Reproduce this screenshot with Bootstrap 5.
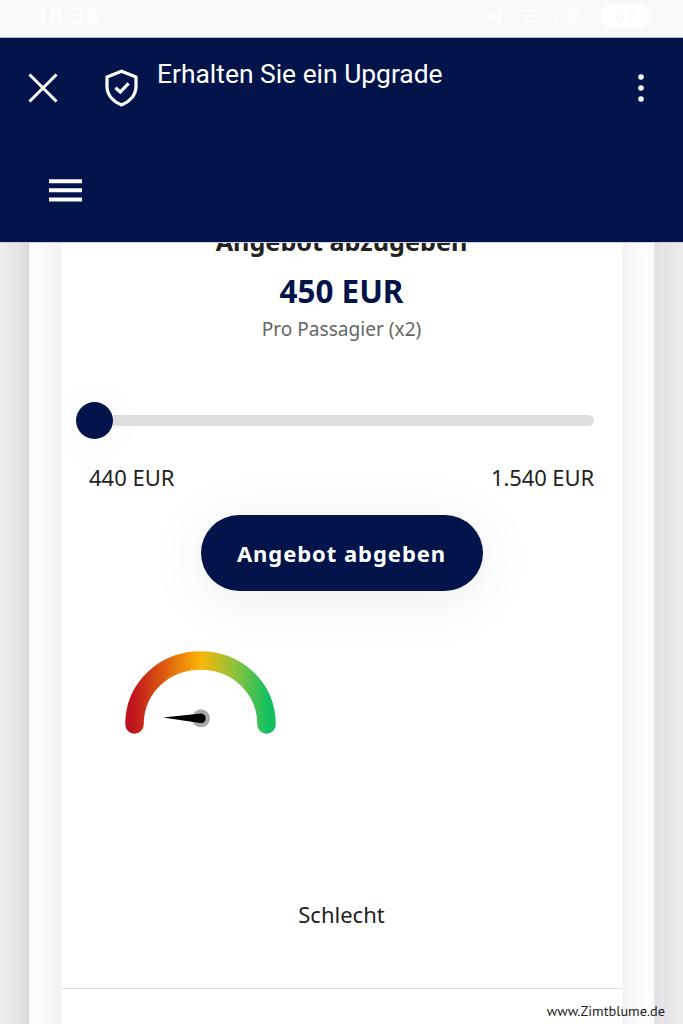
<!DOCTYPE html>
<html lang="de">

<head>
    <meta charset="UTF-8">
    <meta name="viewport" content="width=device-width, initial-scale=1.0">
    <title>Erhalten Sie ein Upgrade</title>

    <!-- Bootstrap CSS -->
    <link href="https://cdn.jsdelivr.net/npm/bootstrap@5.3.0/dist/css/bootstrap.min.css" rel="stylesheet">

    <style>
        body {
            height: 1024px;
            overflow: hidden;
            background-color: #fff;
            color: #222;
            font-family: "Noto Sans", sans-serif;
            font-size: 22px;
            line-height: 30px;
        }

        .status-bar {
            height: 38px;
            padding: 0 34px 5px 35px;
            background-color: #f8f9fb;
            border-bottom: 1px solid #b5b7c9;
            color: #fff;
            font-family: Roboto, sans-serif;
            font-size: 24.5px;
        }

        .battery {
            width: 48px;
            height: 24px;
            background-color: #fff;
            color: #f8f9fb;
            font-size: 18px;
            line-height: 24px;
        }

        .app-header {
            height: 205px;
            background-color: #03144b;
            border-bottom: 1px solid #cdd0e0;
            color: #fff;
        }

        .title-row {
            height: 100px;
            padding-left: 26px;
            padding-right: 36px;
        }

        .shield-icon {
            margin-left: 43px;
        }

        .page-title {
            margin-left: 17px;
            padding-bottom: 28px;
            font-family: Roboto, sans-serif;
            font-size: 26.4px;
            font-weight: 400;
            line-height: 30px;
        }

        .menu-row {
            padding: 40px 0 0 49px;
        }

        .page-area {
            height: 781px;
            padding: 0 29px;
            background: linear-gradient(90deg, #eeeeee 0, #e5e4e5 18px, #dbd8dc 29px, #e3e1e4 654px, #ebebeb 683px);
        }

        .page-sheet {
            padding: 0 32px;
            background: linear-gradient(90deg, #fcfcfd 0, #fafbfc 14px, #f1f3f3 32px, #f2f4f6 593px, #fafbfc 614px, #fdfdfe 625px);
        }

        .offer {
            background-color: #fff;
        }

        .offer-heading {
            height: 30px;
            margin: -17px 0 0;
            font-size: 25.2px;
            font-weight: 700;
            line-height: 30px;
        }

        .offer-top {
            height: 137px;
            overflow: hidden;
        }

        .price {
            margin-top: 15px;
            color: #03144b;
            font-size: 31.4px;
            font-weight: 700;
            line-height: 40px;
        }

        .per-person {
            margin-top: 5px;
            color: #666;
            font-size: 19.1px;
            line-height: 26px;
        }

        .slider-row {
            height: 80px;
            padding: 0 28px 0 15px;
        }

        .slider-knob {
            width: 37px;
            height: 37px;
            background-color: #03144b;
            box-shadow: 0 2px 40px rgba(40, 50, 60, .06);
        }

        .slider-track {
            height: 11px;
            background-color: #dedede;
            border-radius: 0 6px 6px 0;
        }

        .range-labels {
            height: 55px;
            padding: 2px 29px 0 28px;
        }

        .range-max {
            margin-right: -1px;
            letter-spacing: -.1px;
        }

        .btn-offer {
            width: 282px;
            height: 76px;
            --bs-btn-bg: #03144b;
            --bs-btn-color: #fff;
            --bs-btn-hover-bg: #0b2270;
            --bs-btn-hover-color: #fff;
            --bs-btn-font-size: 22px;
            --bs-btn-font-weight: 700;
            --bs-btn-border-width: 0;
            letter-spacing: .95px;
            box-shadow: 0 8px 60px rgba(40, 50, 60, .09);
        }

        .gauge-row {
            height: 308px;
            padding: 56px 0 0 60px;
        }

        .rating {
            height: 90px;
            border-bottom: 1px solid #dcdcdc;
        }

        .site-mark {
            right: 18px;
            bottom: 3px;
            font-family: "PT Sans", "Open Sans", sans-serif;
            font-size: 14.3px;
            line-height: 20px;
        }
    </style>
</head>

<body class="position-relative">

    <!-- Status bar -->
    <div class="status-bar d-flex justify-content-between align-items-center fw-bold">
        <span>18:33</span>
        <div class="d-flex align-items-center">
            <svg width="110" height="24" viewBox="0 0 110 24" fill="none" stroke="#fff" stroke-width="2.4" opacity=".8">
                <path d="M2 11h4l8-5v14l-8-5H2z" fill="#fff" />
                <path d="M33 7h17M36 12h14M40 17h8M54 19v3M61 16v6M68 12v10M84 6h8v5h-8zM84 15h8v5h-8z" />
            </svg>
            <span class="battery rounded-pill text-center ms-1">87</span>
        </div>
    </div>

    <!-- Header -->
    <header class="app-header">
        <div class="title-row d-flex align-items-center">
            <svg width="34" height="34" viewBox="0 0 34 34" fill="none" stroke="#fff" stroke-width="3">
                <path d="M3.5 3.5 30.5 30.5M30.5 3.5 3.5 30.5" />
            </svg>
            <svg class="shield-icon" width="37" height="40" viewBox="0 0 37 40" fill="none" stroke="#fff" stroke-width="3.2" stroke-linejoin="round">
                <path d="M18.5 3.2 33 9.1V18.2C33 27.5 26.2 34 18.5 37 10.8 34 4 27.5 4 18.2V9.1Z" />
                <path d="M12.5 19.7 17.2 24 25.6 15.4" stroke-linejoin="miter" />
            </svg>
            <h1 class="page-title mb-0">Erhalten Sie ein Upgrade</h1>
            <svg class="ms-auto" width="12" height="34" viewBox="0 0 12 34" fill="#fff">
                <circle cx="6" cy="6" r="2.8" />
                <circle cx="6" cy="17" r="2.8" />
                <circle cx="6" cy="28" r="2.8" />
            </svg>
        </div>
        <div class="menu-row d-flex">
            <svg width="33" height="24" viewBox="0 0 33 24" fill="#fff">
                <path d="M0 1.200h33v4H0zM0 10.300h33v4H0zM0 19.400h33v4H0z" />
            </svg>
        </div>
    </header>

    <!-- Offer -->
    <main class="page-area">
        <div class="page-sheet h-100">
            <div class="offer h-100 text-center">
                <div class="offer-top">
                    <h2 class="offer-heading">Angebot abzugeben</h2>
                    <div class="price">450 EUR</div>
                    <div class="per-person">Pro Passagier (x2)</div>
                </div>

                <div class="slider-row d-flex align-items-center">
                    <div class="slider-knob rounded-circle flex-shrink-0"></div>
                    <div class="slider-track flex-grow-1"></div>
                </div>
                <div class="range-labels d-flex justify-content-between">
                    <span>440 EUR</span>
                    <span class="range-max">1.540 EUR</span>
                </div>

                <button type="button" class="btn btn-offer rounded-pill d-block mx-auto">Angebot abgeben</button>

                <div class="gauge-row d-flex align-items-start">
                    <svg width="160" height="95" viewBox="0 0 160 95">
                        <defs>
                            <linearGradient id="rate" gradientUnits="userSpaceOnUse" x1="4" y1="0" x2="155" y2="0">
                                <stop offset="0.04" stop-color="#bd1120" />
                                <stop offset="0.25" stop-color="#dc580f" />
                                <stop offset="0.5" stop-color="#fcb508" />
                                <stop offset="0.72" stop-color="#91c23a" />
                                <stop offset="0.95" stop-color="#12c062" />
                            </linearGradient>
                        </defs>
                        <path d="M13.5 77.5C13.5 41 43 13.5 79.5 13.5S145.5 41 145.5 77.5" fill="none" stroke="url(#rate)" stroke-width="18.5" stroke-linecap="round" />
                        <circle cx="80" cy="71.3" r="9" fill="#aaa" />
                        <path d="M42 70.5 80 66.500A4.800 4.800 0 1 1 79 76Z" fill="#000" />
                    </svg>
                </div>

                <div class="rating">Schlecht</div>
            </div>
        </div>
    </main>

    <div class="site-mark position-absolute">www.Zimtblume.de</div>

    <!-- Bootstrap JS -->
    <script src="https://cdn.jsdelivr.net/npm/bootstrap@5.3.0/dist/js/bootstrap.bundle.min.js"></script>

</body>

</html>
